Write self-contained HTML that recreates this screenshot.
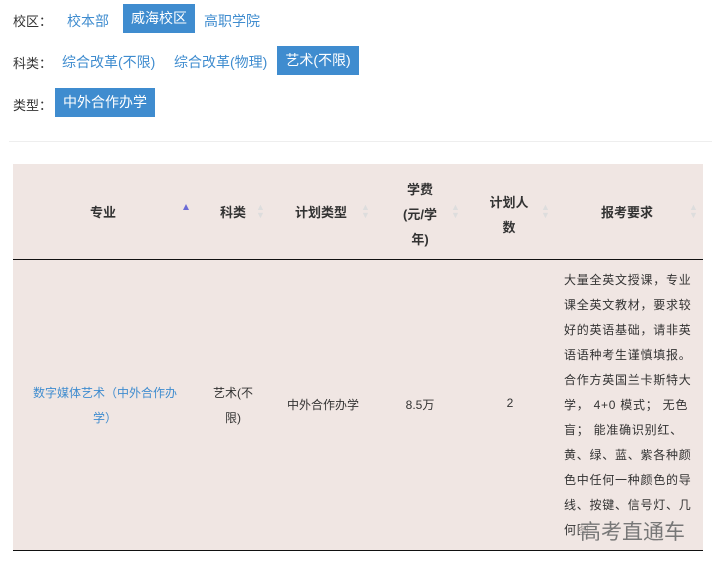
<!DOCTYPE html>
<html><head><meta charset="utf-8"><style>
body{margin:0;width:718px;height:571px;background:#fff;font-family:"Liberation Sans","Noto Sans CJK SC",sans-serif;position:relative;overflow:hidden;font-size:13px;color:#333}
.a{position:absolute;white-space:nowrap}
.lk{color:#3f8ccf}
.btn{position:absolute;background:#3f8ccf;color:#fff;height:29px;line-height:29px;text-align:center;font-size:14px}
.l{font-size:13px;color:#333}
.tb{position:absolute;left:13px;top:164px;width:690px;height:387px;background:#f0e6e3}
.h{position:absolute;font-weight:bold;font-size:13px;text-align:center;color:#333}
.s{position:absolute;width:0;height:0;border-left:3px solid transparent;border-right:3px solid transparent}
.c{font-size:12px;color:#333;position:absolute;text-align:center}
</style></head><body>
<div class="a l" style="left:13px;top:11px">校区：</div>
<div class="a lk" style="left:67px;top:11px;font-size:14px">校本部</div>
<div class="btn" style="left:123px;top:4px;width:72px">威海校区</div>
<div class="a lk" style="left:204px;top:11px;font-size:14px">高职学院</div>
<div class="a l" style="left:13px;top:53px">科类：</div>
<div class="a lk" style="left:62px;top:52px;font-size:14px">综合改革(不限)</div>
<div class="a lk" style="left:174px;top:52px;font-size:14px">综合改革(物理)</div>
<div class="btn" style="left:277px;top:46px;width:82px">艺术(不限)</div>
<div class="a l" style="left:13px;top:95px">类型：</div>
<div class="btn" style="left:55px;top:88px;width:100px">中外合作办学</div>
<div style="position:absolute;left:9px;top:141px;width:703px;height:1px;background:#eee"></div>
<div class="tb"></div>
<div style="position:absolute;left:13px;top:259px;width:690px;height:1px;background:#111"></div>
<div style="position:absolute;left:13px;top:550px;width:690px;height:1px;background:#111"></div>
<div class="h" style="left:90px;top:202px">专业</div>
<div class="s" style="left:183px;top:204px;border-bottom:6px solid #6b6bd6"></div>
<div class="h" style="left:220px;top:202px">科类</div>
<div class="h" style="left:295px;top:202px">计划类型</div>
<div class="h" style="left:396px;top:177px;line-height:25px;width:48px">学费<br>(元/学<br>年)</div>
<div class="h" style="left:487px;top:190px;line-height:25px;width:44px">计划人<br>数</div>
<div class="h" style="left:601px;top:202px">报考要求</div>
<div style="position:absolute;left:256px;top:203px;color:#ddd;font-size:9px;line-height:8px">▲<br>▼</div>
<div style="position:absolute;left:361px;top:203px;color:#ddd;font-size:9px;line-height:8px">▲<br>▼</div>
<div style="position:absolute;left:451px;top:203px;color:#ddd;font-size:9px;line-height:8px">▲<br>▼</div>
<div style="position:absolute;left:541px;top:203px;color:#ddd;font-size:9px;line-height:8px">▲<br>▼</div>
<div style="position:absolute;left:689px;top:203px;color:#ddd;font-size:9px;line-height:8px">▲<br>▼</div>
<div class="c lk" style="left:28px;top:381px;width:154px;line-height:25px;color:#3f8ccf">数字媒体艺术（中外合作办<br>学）</div>
<div class="c" style="left:208px;top:381px;width:50px;line-height:25px">艺术(不<br>限)</div>
<div class="c" style="left:283px;top:396px;width:80px">中外合作办学</div>
<div class="c" style="left:400px;top:396px;width:40px">8.5万</div>
<div class="c" style="left:500px;top:396px;width:20px">2</div>
<div class="c" style="left:564px;top:268px;width:130px;text-align:left;line-height:25px;letter-spacing:0.75px;white-space:normal">大量全英文授课，专业课全英文教材，要求较好的英语基础，请非英语语种考生谨慎填报。合作方英国兰卡斯特大学，&nbsp;4+0&nbsp;模式；&nbsp;无色盲；&nbsp;能准确识别红、黄、绿、蓝、紫各种颜色中任何一种颜色的导线、按键、信号灯、几何图</div>
<div class="a" style="left:580px;top:516px;font-size:21px;color:#777;background:rgba(240,230,227,0.6)">高考直通车</div>
</body></html>
